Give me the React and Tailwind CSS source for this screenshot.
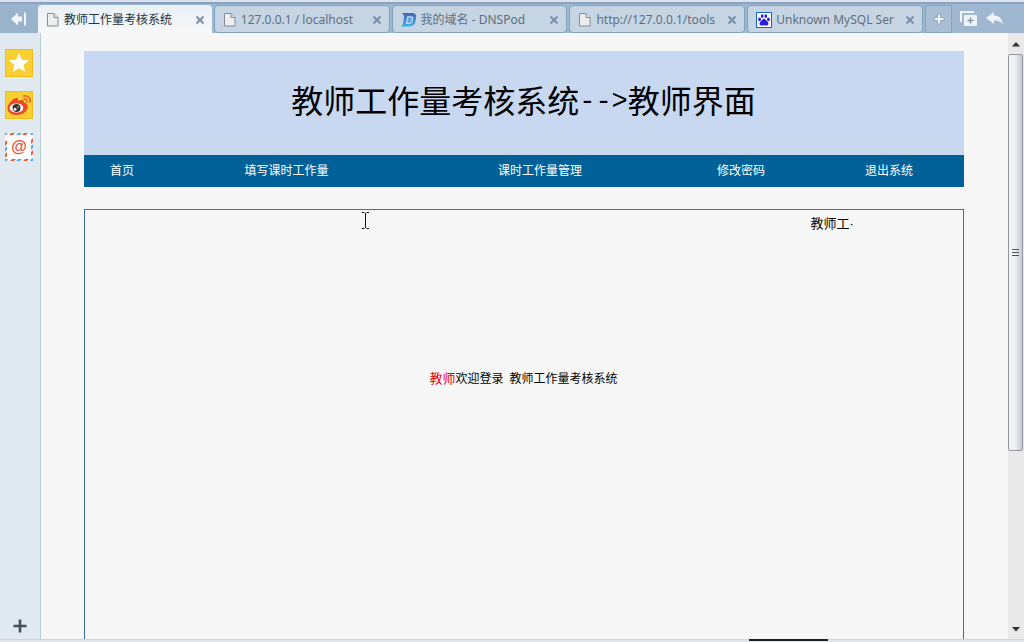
import React from "react";

const tabFont = "font-['Noto_Sans','Noto_Sans_CJK_SC',sans-serif]";

function PageIcon() {
  return (
    <svg width="14" height="16" viewBox="0 0 14 16" className="shrink-0" aria-hidden="true">
      <path d="M1.500 1.500h6.500l4 4v8.500h-10.500z" fill="#eceded" stroke="#858c94" />
      <path d="M8 1.500v4h4" fill="#dfe2e5" stroke="#858c94" />
    </svg>
  );
}

function DnsPodIcon() {
  return (
    <svg width="16" height="16" viewBox="0 0 16 16" className="shrink-0" aria-hidden="true">
      <defs>
        <linearGradient id="dns" x1="0" y1="0" x2="0" y2="1">
          <stop offset="0" stopColor="#4a62b4" />
          <stop offset="0.5" stopColor="#3f86d4" />
          <stop offset="1" stopColor="#35b6ea" />
        </linearGradient>
      </defs>
      <path d="M1 1h10c3.500 0 4.500 2 4 5l-.6 3.500C13.800 13 11.500 14.500 8 14.500H0l2-2.500L3.200 4z" fill="url(#dns)" />
      <path d="M6.700 4.800h3.500c1.300 0 1.600.8 1.400 2l-.5 2.500c-.3 1.400-1.200 2-2.500 2H5.500z" fill="#6f9fdc" stroke="#c3dcf2" strokeWidth="1.200" />
    </svg>
  );
}

function PawIcon() {
  return (
    <svg width="16" height="16" viewBox="0 0 16 16" className="shrink-0" aria-hidden="true">
      <rect x="0.5" y="0.5" width="15" height="15" fill="#fff" stroke="#1667c9" />
      <g fill="#2a1ee0">
        <ellipse cx="3.600" cy="7.300" rx="1.400" ry="1.900" />
        <ellipse cx="6.200" cy="4.100" rx="1.400" ry="1.900" />
        <ellipse cx="9.800" cy="4.100" rx="1.400" ry="1.900" />
        <ellipse cx="12.400" cy="7.300" rx="1.400" ry="1.900" />
        <path d="M8 6.800c1.500 0 2 1.500 3.200 2.500 1.500 1.200 1.800 4-.4 4.300-1.100.1-1.700-.4-2.800-.4s-1.700.5-2.800.4c-2.200-.3-1.900-3.100-.4-4.300C6 8.300 6.500 6.800 8 6.800z" />
      </g>
    </svg>
  );
}

function CloseIcon() {
  return (
    <svg width="10" height="10" viewBox="0 0 10 10" aria-hidden="true">
      <path d="M1.500 1.500l7 7M8.500 1.500l-7 7" stroke="#7890aa" strokeWidth="2" />
    </svg>
  );
}

function Tab({ icon, title, active }) {
  return (
    <div
      className={
        active
          ? "flex h-7 min-w-0 flex-1 items-center gap-1 rounded-t-sm bg-linear-to-b from-[#e9f0f6] to-[#f7f8f9] pt-0.5 pr-[7px] pl-2"
          : "flex h-7 min-w-0 flex-1 items-center gap-1 rounded-sm border border-[#7fa2bf] bg-[#c6d5e4] pt-0.5 pr-[7px] pl-2"
      }
    >
      {icon}
      <a
        href="#"
        className={
          active
            ? "min-w-0 flex-1 overflow-hidden text-[12px] leading-5 whitespace-nowrap text-[#26323c]"
            : "min-w-0 flex-1 overflow-hidden text-[12px] leading-5 whitespace-nowrap text-[#5f6f7e]"
        }
      >
        {title}
      </a>
      <button type="button" aria-label="关闭" className="shrink-0">
        <CloseIcon />
      </button>
    </div>
  );
}

function TabBar() {
  return (
    <header className={`flex h-[33px] shrink-0 border-t-2 border-[#dfe2ee] ${tabFont}`}>
      <div className="flex min-w-0 flex-1 items-end border-t-2 border-[#86a3c2] bg-[#9fb7d0]">
        <button type="button" aria-label="收起侧栏" className="flex h-7 w-[38px] shrink-0 items-center justify-center rounded-br bg-[#9ab3cd]">
          <svg width="16" height="14" viewBox="0 0 16 14" aria-hidden="true">
            <path d="M0 7l7-6.500v4h4v5h-4v4z" fill="#f1f5f9" />
            <path d="M13 0.500h2v13h-2z" fill="#f1f5f9" />
          </svg>
        </button>
        <nav className="flex min-w-0 flex-1 gap-0.5">
          <Tab active icon={<PageIcon />} title="教师工作量考核系统" />
          <Tab icon={<PageIcon />} title="127.0.0.1 / localhost" />
          <Tab icon={<DnsPodIcon />} title="我的域名 - DNSPod" />
          <Tab icon={<PageIcon />} title="http://127.0.0.1/tools" />
          <Tab icon={<PawIcon />} title="Unknown MySQL Ser" />
        </nav>
        <button type="button" aria-label="新建标签" className="ml-0.5 flex h-7 w-[27px] shrink-0 items-center justify-center border border-[#86a3bf] bg-[#a9bfd5]">
          <svg width="12" height="12" viewBox="0 0 12 12" aria-hidden="true">
            <path d="M4.500 1h3v3.500H11v3H7.500V11h-3V7.500H1v-3h3.500z" fill="#f3f5f7" stroke="#8498ad" strokeWidth="0.800" />
          </svg>
        </button>
        <div className="flex h-7 w-[72px] shrink-0 items-center gap-2 pl-2">
          <button type="button" aria-label="标签列表">
            <svg width="18" height="16" viewBox="0 0 18 16" aria-hidden="true">
              <path d="M1 11V1h13" fill="none" stroke="#eef3f8" strokeWidth="2" />
              <rect x="4" y="4" width="13" height="11" rx="1" fill="#eef3f8" />
              <path d="M10.500 6.500v6M7.500 9.500h6" stroke="#8398ae" strokeWidth="1.500" />
            </svg>
          </button>
          <button type="button" aria-label="恢复">
            <svg width="18" height="14" viewBox="0 0 18 14" aria-hidden="true">
              <path d="M0 6l8-6v3.500c5 0 8 3 9 9-2-3-4.500-4-9-4V12z" fill="#eef3f8" />
            </svg>
          </button>
        </div>
      </div>
    </header>
  );
}

function Sidebar() {
  return (
    <aside className="flex w-[41px] shrink-0 flex-col items-center gap-3.5 border-r border-[#b5cfd2] bg-[#e0e8f0] pt-4 pr-0.5 pb-1.5">
      <button type="button" aria-label="收藏">
        <svg width="28" height="28" viewBox="0 0 28 28" aria-hidden="true">
          <rect x="0.5" y="0.5" width="27" height="27" fill="#f8d032" stroke="#f2bd18" />
          <path d="M14 3.800l2.800 6.900 7.300.5-5.600 4.700 1.800 7.200L14 19.200l-6.300 3.900 1.800-7.200-5.600-4.700 7.300-.5z" fill="#fffef8" />
        </svg>
      </button>
      <button type="button" aria-label="微博">
        <svg width="28" height="28" viewBox="0 0 28 28" aria-hidden="true">
          <rect x="0.5" y="0.5" width="27" height="27" fill="#f8d032" stroke="#f2bd18" />
          <path d="M2.500 17.500c0-5 6-10.500 9-10.500 1.800 0 2 1.600 1.500 3 3-1.600 6.500-1.500 6 1.500 3 .5 4.500 3 3.500 6C21 22 16 24 11.500 24c-5 0-9-2.500-9-6.500z" fill="#ea4b28" />
          <ellipse cx="11.500" cy="17" rx="6.800" ry="4.600" fill="#fff" />
          <circle cx="11.500" cy="17" r="4" fill="#333" />
          <circle cx="10" cy="18.200" r="1.500" fill="#fff" />
          <circle cx="13" cy="16" r="0.700" fill="#fff" />
          <path d="M18.500 5c4-1 7.500 2 6.500 6M19 8c2-.5 3.500 1 3 3" fill="none" stroke="#ea6a2c" strokeWidth="1.700" strokeLinecap="round" />
        </svg>
      </button>
      <button type="button" aria-label="邮箱" className="relative flex size-7 items-center justify-center">
        <svg width="28" height="28" viewBox="0 0 28 28" className="absolute inset-0" aria-hidden="true">
          <rect width="28" height="28" fill="#fdfdfd" />
          <g fill="#ee5b40">
            <path d="M6 0h4l-2 2h-4z" /><path d="M19 0h4l-2 2h-4z" />
            <path d="M5 28h4l2-2H7z" /><path d="M18 28h4l2-2h-4z" />
            <path d="M0 9l2-2v4L0 13z" /><path d="M0 21l2-2v4L0 25z" />
            <path d="M28 5l-2 2v4l2-2z" /><path d="M28 17l-2 2v4l2-2z" />
          </g>
          <g fill="#58a9ee">
            <path d="M0 0h3L1 2H0z" /><path d="M13 0h4l-2 2h-4z" /><path d="M26 0h2v2h-3z" />
            <path d="M0 28v-2h3l-1 2z" /><path d="M11 28h4l2-2h-4z" /><path d="M25 28h3v-3l-2 1z" />
            <path d="M0 15l2-2v4L0 19z" /><path d="M28 11l-2 2v4l2-2z" />
          </g>
        </svg>
        <span className="relative font-['Liberation_Sans',sans-serif] text-[16px] leading-6 font-bold text-[#ea5238]">@</span>
      </button>
      <button type="button" aria-label="添加" className="mt-auto pl-0.5">
        <svg width="14" height="14" viewBox="0 0 14 14" aria-hidden="true">
          <path d="M7 0.500v13M0.500 7h13" stroke="#454e55" strokeWidth="2.600" />
        </svg>
      </button>
    </aside>
  );
}

function Scrollbar() {
  return (
    <div className="flex w-4 shrink-0 flex-col items-start bg-[#e9e9ea]" aria-hidden="true">
      <div className="flex h-[21px] w-full shrink-0 items-center justify-center pt-0.5">
        <svg width="8" height="5" viewBox="0 0 8 5"><path d="M4 0l4 4.500H0z" fill="#333" /></svg>
      </div>
      <div className="flex w-[15px] flex-[396] items-center justify-center rounded-xs border border-[#9698a0] bg-linear-to-r from-[#f2f2f3] from-40% to-[#c8cad4]">
        <svg width="7" height="9" viewBox="0 0 7 9">
          <path d="M0 1.500h7M0 4.500h7M0 7.500h7" stroke="#50545c" />
        </svg>
      </div>
      <div className="flex-[168]" />
      <div className="flex h-[21px] w-full shrink-0 items-center justify-center pt-0.5">
        <svg width="8" height="5" viewBox="0 0 8 5"><path d="M0 0h8L4 4.500z" fill="#333" /></svg>
      </div>
    </div>
  );
}

const links = ["首页", "填写课时工作量", "课时工作量管理", "修改密码", "退出系统"];

function TeacherPage() {
  return (
    <main className="relative flex min-w-0 flex-1 flex-col overflow-hidden pt-[18px] pr-[22px] pl-5 font-['Liberation_Sans','Noto_Sans_CJK_SC',sans-serif] text-[12px] leading-5 text-black">
      <div className="mx-auto flex w-full max-w-[880px] flex-1 flex-col">
        <h1 className="flex h-[104px] items-center justify-center bg-[#c8d8f0] pb-0.5 text-[32px] leading-10 whitespace-nowrap">
          教师工作量考核系统
          <span className="font-['Liberation_Mono',monospace] text-[27px]">--&gt;</span>
          教师界面
        </h1>
        <nav className="grid h-8 grid-cols-[77fr_252fr_255fr_147fr_149fr] items-center bg-[#006199] text-center whitespace-nowrap text-white">
          {links.map((label) => (
            <a key={label} href="#">{label}</a>
          ))}
        </nav>
        <section className="mt-[22px] flex-1 border border-b-0 border-[#3f68b8] pt-1">
          <div className="mr-[108px] ml-auto w-11 text-[13px] whitespace-nowrap">教师工·</div>
          <p className="mt-[135px] text-center">
            <span className="text-[13px] text-[#f00000]">教师</span>
            欢迎登录
            <span className="ml-1.5">教师工作量考核系统</span>
          </p>
        </section>
      </div>
      <svg width="9" height="17" viewBox="0 0 9 17" className="absolute top-[179px] left-[320px]" aria-hidden="true">
        <path d="M1 0.500h2.500M5.500 0.500h2.500M1 16.500h2.500M5.500 16.500h2.500M4.500 1v15" stroke="#111" fill="none" />
      </svg>
    </main>
  );
}

export default function App() {
  return (
    <div className="flex h-screen flex-col overflow-hidden bg-[#f7f7f7]">
      <TabBar />
      <div className="flex min-h-0 flex-1">
        <Sidebar />
        <TeacherPage />
        <Scrollbar />
      </div>
      <footer className="flex h-[3px] shrink-0 justify-end border-t border-[#cfd4dc] bg-[#e2e6ec] pr-[196px]">
        <div className="-mt-px h-0.5 w-[79px] bg-[#1c221f]" />
      </footer>
    </div>
  );
}
